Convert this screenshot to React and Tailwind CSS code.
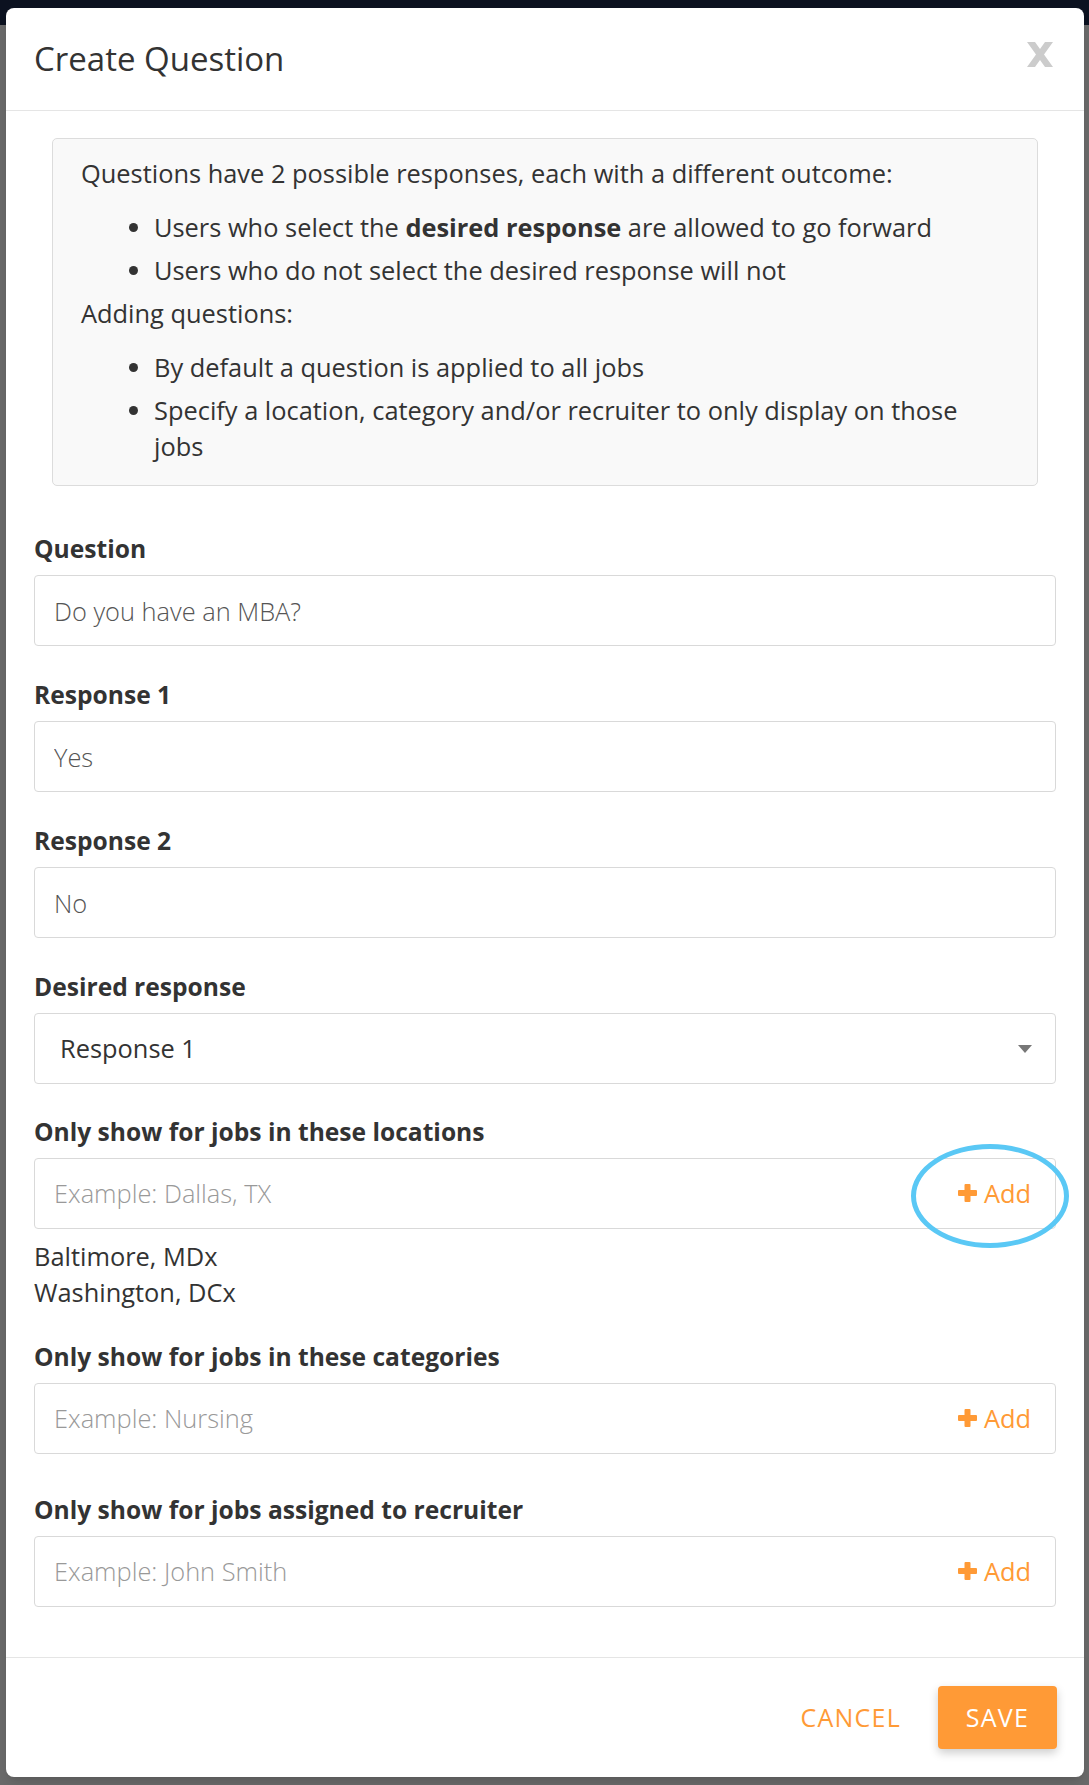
import React from 'react';

const ORANGE = 'text-[#ff9a36]';

function CloseIcon() {
    return (
        <svg width="26" height="25" viewBox="0 0 26 25" className="fill-[#cccccc]">
            <path d="M0 0 H8 L13 6.94 L18 0 H26 L17 12.5 L26 25 H18 L13 18.06 L8 25 H0 L9 12.5 Z" />
        </svg>
    );
}

function PlusIcon() {
    return (
        <svg width="19" height="18" viewBox="0 0 19 18" className="fill-[#ff9a36]">
            <rect x="6.5" y="0" width="6" height="18" rx="1" />
            <rect x="0" y="6" width="19" height="6" rx="1" />
        </svg>
    );
}

function Label({ children }) {
    return <label className="block text-[24.6px] leading-[36px] font-bold text-[#333] mb-[8px]">{children}</label>;
}

function TextField({ label, value, className = '' }) {
    return (
        <div className={className}>
            <Label>{label}</Label>
            <input
                readOnly
                defaultValue={value}
                className="w-full h-[71px] border border-[#d9d9d9] rounded-[4px] px-[19px] text-[25.4px] font-light text-[#555] outline-none"
            />
        </div>
    );
}

function AddField({ label, placeholder, className = '', highlight = false, children }) {
    return (
        <div className={className}>
            <Label>{label}</Label>
            <div className="relative flex items-center h-[71px] border border-[#d9d9d9] rounded-[4px] pl-[19px] pr-[24px]">
                <input
                    readOnly
                    placeholder={placeholder}
                    className="flex-1 min-w-0 text-[25.4px] font-light text-[#555] placeholder:text-[#999] outline-none bg-transparent"
                />
                <button className={`flex items-center gap-[7px] text-[25.4px] ${ORANGE}`}>
                    <PlusIcon />
                    Add
                </button>
                {highlight && (
                    <div className="absolute left-[876px] top-[-15px] w-[158px] h-[104px] rounded-[50%] border-[5px] border-[#5ac8f5] pointer-events-none" />
                )}
            </div>
            {children}
        </div>
    );
}

export default function App() {
    return (
        <div className="min-h-[1785px] bg-[linear-gradient(to_bottom,#0c1220_25px,#6a6a6a_25px)] pt-[8px] pl-[6px] pr-[5px] pb-[8px] font-['Open_Sans',sans-serif]">
            <div className="bg-white rounded-[8px] shadow-lg flex flex-col">

                {/* Header */}
                <div className="h-[103px] border-b border-[#e5e5e5] flex items-center justify-between pl-[28px] pr-[31px]">
                    <h2 className="text-[33px] text-[#333] font-normal">Create Question</h2>
                    <button className="-mt-[9px]"><CloseIcon /></button>
                </div>

                {/* Body */}
                <div className="px-[28px] pt-[27px] pb-[50px]">
                    <div className="mx-[18px] mb-[45px] bg-[#f9f9f9] border border-[#dcdcdc] rounded-[5px] pl-[28px] pr-[40px] pt-[16px] pb-[14px] text-[25.4px] leading-[36px] text-[#333]">
                        <p>Questions have 2 possible responses, each with a different outcome:</p>
                        <ul className="list-disc pl-[73px] mt-[18px]">
                            <li className="mb-[7px]">Users who select the <strong className="font-bold">desired response</strong> are allowed to go forward</li>
                            <li className="mb-[7px]">Users who do not select the desired response will not</li>
                        </ul>
                        <p>Adding questions:</p>
                        <ul className="list-disc pl-[73px] mt-[18px]">
                            <li className="mb-[7px]">By default a question is applied to all jobs</li>
                            <li className="mb-[7px]">Specify a location, category and/or recruiter to only display on those jobs</li>
                        </ul>
                    </div>

                    <TextField label="Question" value="Do you have an MBA?" />
                    <TextField label="Response 1" value="Yes" className="mt-[31px]" />
                    <TextField label="Response 2" value="No" className="mt-[31px]" />

                    <div className="mt-[31px]">
                        <Label>Desired response</Label>
                        <div className="h-[71px] border border-[#d9d9d9] rounded-[4px] pl-[25px] pr-[23px] flex items-center justify-between">
                            <span className="text-[25.4px] text-[#333]">Response 1</span>
                            <svg width="14" height="8" viewBox="0 0 14 8" className="fill-[#777]">
                                <path d="M0 0 H14 L7 8 Z" />
                            </svg>
                        </div>
                    </div>

                    <AddField label="Only show for jobs in these locations" placeholder="Example: Dallas, TX" className="mt-[30px]" highlight>
                        <div className="mt-[9px] text-[25.4px] leading-[36px] text-[#333]">
                            <div>Baltimore, MDx</div>
                            <div>Washington, DCx</div>
                        </div>
                    </AddField>
                    <AddField label="Only show for jobs in these categories" placeholder="Example: Nursing" className="mt-[29px]" />
                    <AddField label="Only show for jobs assigned to recruiter" placeholder="Example: John Smith" className="mt-[38px]" />
                </div>

                {/* Footer */}
                <div className="h-[120px] border-t border-[#e5e5e5] flex items-center justify-end gap-[17px] pr-[27px]">
                    <button className={`px-[20px] h-[63px] text-[25px] tracking-wider ${ORANGE}`}>CANCEL</button>
                    <button className="w-[119px] h-[63px] rounded-[4px] bg-[#ff9a36] text-white text-[25px] tracking-wider shadow-[0_4px_10px_rgba(0,0,0,0.2)]">SAVE</button>
                </div>
            </div>
        </div>
    );
}
